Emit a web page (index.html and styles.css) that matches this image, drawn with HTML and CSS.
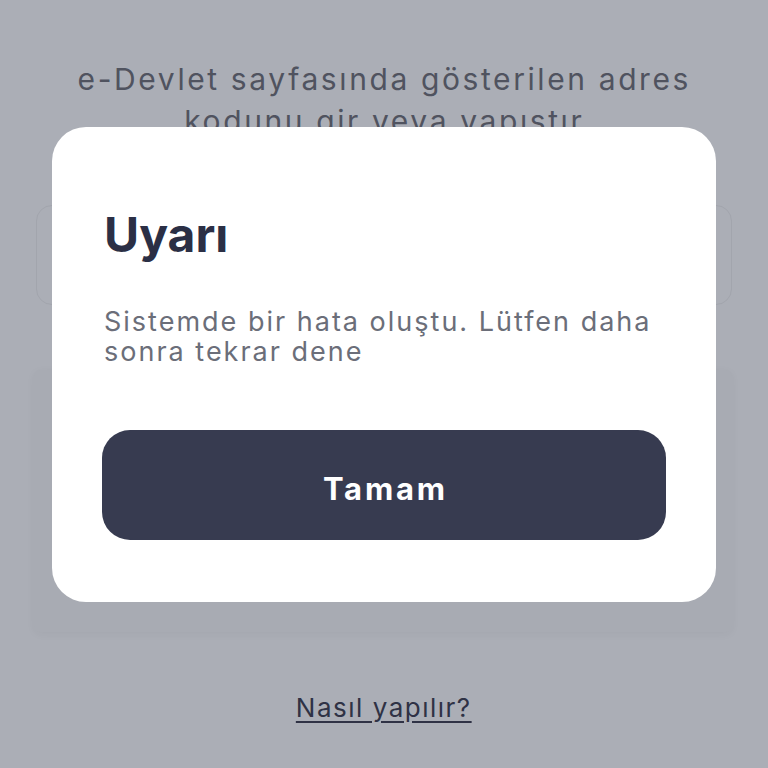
FILE: index.html
```html
<!DOCTYPE html>
<html lang="tr">
<head>
<meta charset="utf-8">
<link rel="stylesheet" href="styles.css">
</head>
<body>
<div class="page">
  <p class="intro">e-Devlet sayfasında gösterilen adres kodunu gir veya yapıştır</p>
  <div class="input"></div>
  <div class="card"></div>
  <a class="help">Nasıl yapılır?</a>
</div>
<div class="modal">
  <h1 class="modal-title">Uyarı</h1>
  <p class="modal-text">Sistemde bir hata oluştu. Lütfen daha sonra tekrar dene</p>
  <button class="modal-btn">Tamam</button>
</div>
</body>
</html>
```
FILE: styles.css
```css
html, body {
  margin: 0;
  padding: 0;
  background: #abaeb6;
  font-family: Inter, "Noto Sans", sans-serif;
  height: 768px;
  overflow: hidden;
}
.page {
  display: flex;
  flex-direction: column;
  padding: 58px 36px 0 34px;
}
.intro {
  margin: 0 20px;
  padding-left: 2.6px;
  text-align: center;
  font-size: 30px;
  line-height: 42px;
  letter-spacing: 2.6px;
  color: #50535f;
}
.input {
  margin-top: 63px;
  height: 98px;
  margin-left: 2px;
  border: 1px solid #a2a5ad;
  border-radius: 16px;
}
.card {
  margin-top: 65px;
  height: 262px;
  background: #a8abb3;
  border-radius: 6px;
  box-shadow: 0 2px 10px rgba(0,0,0,0.04);
}
.help {
  margin-top: 61px;
  align-self: center;
  padding-left: 1.5px;
  font-size: 26px;
  line-height: 30px;
  letter-spacing: 1.5px;
  color: #2f3245;
  text-decoration: underline;
  text-underline-offset: 4px;
}
.modal {
  position: absolute;
  left: 52px;
  top: 127px;
  width: 664px;
  height: 475px;
  box-sizing: border-box;
  background: #fff;
  border-radius: 34px;
  padding: 80px 50px 0 50px;
  display: flex;
  flex-direction: column;
}
.modal-title {
  margin: 0 0 0 2px;
  font-size: 48px;
  line-height: 56px;
  font-weight: 700;
  color: #2b2f45;
}
.modal-text {
  margin: 44px 0 0 2px;
  font-size: 27px;
  line-height: 30px;
  letter-spacing: 2px;
  color: #6b6e79;
}
.modal-btn {
  margin-top: 63px;
  height: 110px;
  border: none;
  border-radius: 28px;
  background: #373b50;
  color: #fff;
  font-family: inherit;
  font-size: 31px;
  font-weight: 700;
  letter-spacing: 2.8px;
  padding: 6px 0 0 2.8px;
}
```
